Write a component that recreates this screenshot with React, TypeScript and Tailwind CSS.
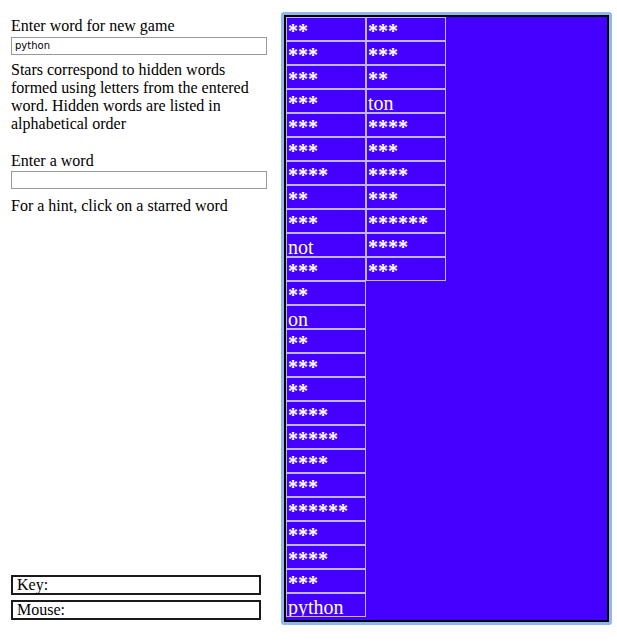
const col1 = [
  "**", "***", "***", "***", "***", "***", "****", "**", "***", "not", "***", "**", "on",
  "**", "***", "**", "****", "*****", "****", "***", "******", "***", "****", "***", "python",
];
const col2 = ["***", "***", "**", "ton", "****", "***", "****", "***", "******", "****", "***"];

const serif = { fontFamily: '"Liberation Serif", "Times New Roman", serif' };

function WordColumn({ words }: { words: string[] }) {
  return (
    <div className="flex flex-col w-[80px]">
      {words.map((w, i) => (
        <div
          key={i}
          className={
            w.startsWith("*")
              ? "h-[24px] box-border border border-[#c2b6ff] pt-[3px] pl-[1px] text-[20px] leading-[20px] text-white font-bold overflow-hidden whitespace-nowrap cursor-pointer"
              : "h-[24px] box-border border border-[#c2b6ff] pt-[3px] pl-[1px] text-[20px] leading-[20px] text-white overflow-hidden whitespace-nowrap cursor-pointer"
          }
        >
          {w}
        </div>
      ))}
    </div>
  );
}

export default function App() {
  return (
    <div className="flex pt-[12px] bg-white text-black" style={serif}>
      <div className="w-[281px] pl-[11px] pt-[5px] pb-[5px] flex flex-col text-[16px] leading-[18px]">
        <div>Enter word for new game</div>
        <input
          className="mt-[2px] w-[256px] h-[18px] border border-[#9a9a9a] px-[3px] text-[10px] outline-none"
          style={{ fontFamily: '"DejaVu Sans", "Liberation Sans", sans-serif' }}
          defaultValue="python"
        />
        <p className="mt-[6px] w-[250px]">
          Stars correspond to hidden words formed using letters from the entered word. Hidden words are listed in
          alphabetical order
        </p>
        <div className="mt-[19px]">Enter a word</div>
        <input className="mt-[1px] w-[256px] h-[18px] border border-[#9a9a9a] outline-none" />
        <div className="mt-[8px]">For a hint, click on a starred word</div>

        <div className="mt-auto flex flex-col gap-[5px]">
          <div className="w-[250px] h-[20px] border-2 border-[#1a1a1a] pl-[4px] leading-[16px]">Key:</div>
          <div className="w-[250px] h-[20px] border-2 border-[#1a1a1a] pl-[4px] leading-[16px]">Mouse:</div>
        </div>
      </div>

      <div className="w-[331px] h-[613px] border-[3px] border-[#8fb9ec] rounded-[3px]">
        <div className="h-full border-2 border-black bg-[#4400ff] flex items-start">
          <WordColumn words={col1} />
          <WordColumn words={col2} />
        </div>
      </div>
    </div>
  );
}
